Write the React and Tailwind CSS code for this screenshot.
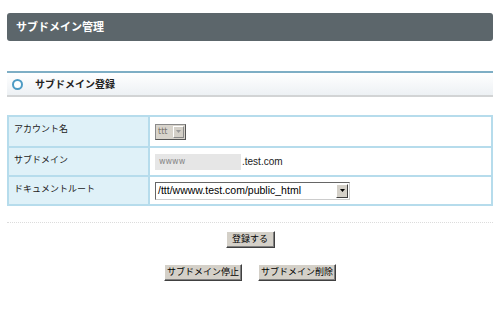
export default function App() {
  const rows = [
    { label: "アカウント名", key: "account" },
    { label: "サブドメイン", key: "sub" },
    { label: "ドキュメントルート", key: "root" },
  ];

  const btn =
    "bg-[#d4d0c8] text-[9px] leading-none text-black h-[17px] border border-t-white border-l-white border-r-[#404040] border-b-[#404040] shadow-[inset_-1px_-1px_0_#808080] flex items-center justify-center whitespace-nowrap";

  return (
    <div
      className="w-[500px] h-[310px] bg-white pt-[13px] px-[7px]"
      style={{ fontFamily: '"Liberation Sans", "Noto Sans CJK JP", sans-serif' }}
    >
      <div className="h-[28px] rounded-[3px] bg-[#5c666b] flex items-center pl-[9px] text-white text-[11px] font-bold">
        サブドメイン管理
      </div>

      <div className="mt-[30px] h-[26px] border-t-2 border-t-[#7eaec5] border-b-2 border-b-[#d2d4d5] bg-gradient-to-b from-white to-[#edf1f4] flex items-center pl-[5px]">
        <span className="w-[11px] h-[11px] rounded-full border-[2.5px] border-[#4d9bc4] bg-white" />
        <span className="ml-[12px] text-[10px] font-bold text-[#222]">サブドメイン登録</span>
      </div>

      <div className="mt-[18px] border-2 border-[#b6dcec]">
        {rows.map((r, i) => (
          <div
            key={r.key}
            className={`flex h-[29px] ${i > 0 ? "border-t-2 border-[#b6dcec]" : ""}`}
          >
            <div className="w-[141px] bg-[#dff1f8] border-r-2 border-[#b6dcec] pl-[5px] pt-[6px] text-[9px] leading-[12px] text-[#222]">
              {r.label}
            </div>
            <div className="flex-1 flex items-center pl-[5px] text-[10px] text-[#333]">
              {r.key === "account" && (
                <div className="flex items-center h-[16px] w-[31px] bg-[#d8d4cc] border border-[#8a8a8a] border-r-[#555] border-b-[#555]">
                  <span className="flex-1 pl-[2px] font-['DejaVu_Sans',sans-serif] text-[8px] leading-none text-[#7a756f]">ttt</span>
                  <span className="w-[11px] h-[12px] mr-[1px] bg-[#d4d0c8] border border-t-white border-l-white border-r-[#888] border-b-[#888] flex items-center justify-center">
                    <svg width="5" height="3" viewBox="0 0 5 3"><path d="M0 0h5L2.5 3z" fill="#999" /></svg>
                  </span>
                </div>
              )}
              {r.key === "sub" && (
                <>
                  <div className="w-[86px] h-[16px] bg-[#e6e6e6] flex items-center pl-[4px] font-['DejaVu_Sans',sans-serif] text-[8px] text-[#888]">
                    wwww
                  </div>
                  <span className="ml-[1px] text-[10px] text-[#222]">.test.com</span>
                </>
              )}
              {r.key === "root" && (
                <div className="flex items-center h-[18px] w-[195px] bg-white border border-t-[#666] border-l-[#666] border-r-[#ccc] border-b-[#ccc]">
                  <span className="flex-1 pl-[2px] text-[10.5px] text-black">/ttt/wwww.test.com/public_html</span>
                  <span className="w-[12px] h-[14px] mr-[1px] bg-[#d4d0c8] border border-t-white border-l-white border-r-[#404040] border-b-[#404040] flex items-center justify-center">
                    <svg width="5" height="3" viewBox="0 0 5 3"><path d="M0 0h5L2.5 3z" fill="#000" /></svg>
                  </span>
                </div>
              )}
            </div>
          </div>
        ))}
      </div>

      <div className="mt-[16px] border-t border-dotted border-[#dcdcdc]" />

      <div className="mt-[8px] flex justify-center">
        <button className={`${btn} w-[49px]`}>登録する</button>
      </div>

      <div className="mt-[16px] flex justify-center gap-[16px]">
        <button className={`${btn} w-[78px]`}>サブドメイン停止</button>
        <button className={`${btn} w-[78px]`}>サブドメイン削除</button>
      </div>
    </div>
  );
}
